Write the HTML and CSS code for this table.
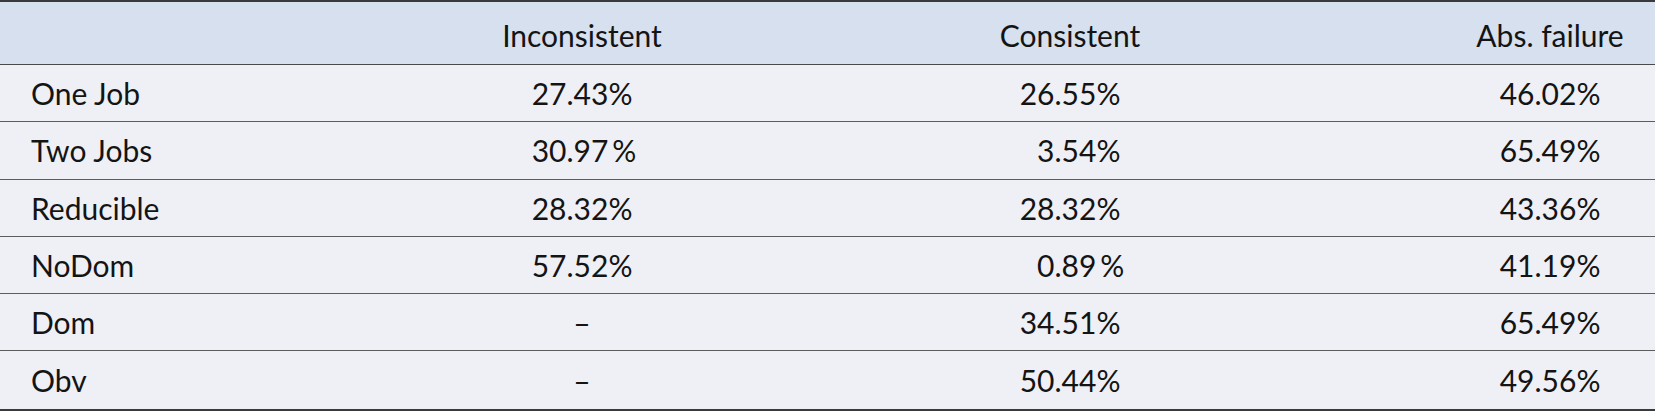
FILE: index.html
```html
<!DOCTYPE html>
<html>
<head>
<meta charset="utf-8">
<link rel="stylesheet" href="styles.css">
</head>
<body>
<div class="table">
  <div class="row head">
    <div class="cell label"></div>
    <div class="cell c2">Inconsistent</div>
    <div class="cell c3">Consistent</div>
    <div class="cell c4">Abs. failure</div>
  </div>
  <div class="row">
    <div class="cell label">One Job</div>
    <div class="cell c2"><span class="num"><span class="i">27</span><span class="f">.43%</span></span></div>
    <div class="cell c3"><span class="num"><span class="i">26</span><span class="f">.55%</span></span></div>
    <div class="cell c4"><span class="num"><span class="i">46</span><span class="f">.02%</span></span></div>
  </div>
  <div class="row">
    <div class="cell label">Two Jobs</div>
    <div class="cell c2"><span class="num"><span class="i">30</span><span class="f">.97&#8201;%</span></span></div>
    <div class="cell c3"><span class="num"><span class="i">3</span><span class="f">.54%</span></span></div>
    <div class="cell c4"><span class="num"><span class="i">65</span><span class="f">.49%</span></span></div>
  </div>
  <div class="row">
    <div class="cell label">Reducible</div>
    <div class="cell c2"><span class="num"><span class="i">28</span><span class="f">.32%</span></span></div>
    <div class="cell c3"><span class="num"><span class="i">28</span><span class="f">.32%</span></span></div>
    <div class="cell c4"><span class="num"><span class="i">43</span><span class="f">.36%</span></span></div>
  </div>
  <div class="row">
    <div class="cell label">NoDom</div>
    <div class="cell c2"><span class="num"><span class="i">57</span><span class="f">.52%</span></span></div>
    <div class="cell c3"><span class="num"><span class="i">0</span><span class="f">.89&#8201;%</span></span></div>
    <div class="cell c4"><span class="num"><span class="i">41</span><span class="f">.19%</span></span></div>
  </div>
  <div class="row">
    <div class="cell label">Dom</div>
    <div class="cell c2"><span class="dash">–</span></div>
    <div class="cell c3"><span class="num"><span class="i">34</span><span class="f">.51%</span></span></div>
    <div class="cell c4"><span class="num"><span class="i">65</span><span class="f">.49%</span></span></div>
  </div>
  <div class="row last">
    <div class="cell label">Obv</div>
    <div class="cell c2"><span class="dash">–</span></div>
    <div class="cell c3"><span class="num"><span class="i">50</span><span class="f">.44%</span></span></div>
    <div class="cell c4"><span class="num"><span class="i">49</span><span class="f">.56%</span></span></div>
  </div>
</div>
</body>
</html>
```
FILE: styles.css
```css
* { box-sizing: border-box; }
html, body {
  margin: 0;
  padding: 0;
  background: #ffffff;
}
body {
  font-family: Lato, "Liberation Sans", sans-serif;
  font-size: 30px;
  color: #141414;
}
.table {
  width: 1655px;
  border-top: 2px solid #3a3a3a;
  border-bottom: 2px solid #3a3a3a;
  background: #eff0f5;
}
.row {
  display: grid;
  grid-template-columns: 440px 284px 692px 1fr;
  height: 57.3px;
  align-items: center;
  border-bottom: 1.3px solid #5c5c5c;
}
.row.last { border-bottom: none; }
.row.head {
  background: #d6e0ee;
  height: 63px;
  padding-top: 4px;
  border-bottom: 1.5px solid #4a4a4a;
}
.cell {
  white-space: nowrap;
  line-height: 1;
}
.label { padding-left: 31px; }
.c2, .c3 { text-align: center; }
.c4 {
  text-align: center;
  padding-left: 60px;
  padding-right: 31px;
}
.num {
  display: inline-flex;
}
.num .i {
  display: inline-block;
  width: 35px;
  text-align: right;
}
.num .f {
  display: inline-block;
  width: 66px;
  text-align: left;
}
.dash { display: inline-block; }
```
